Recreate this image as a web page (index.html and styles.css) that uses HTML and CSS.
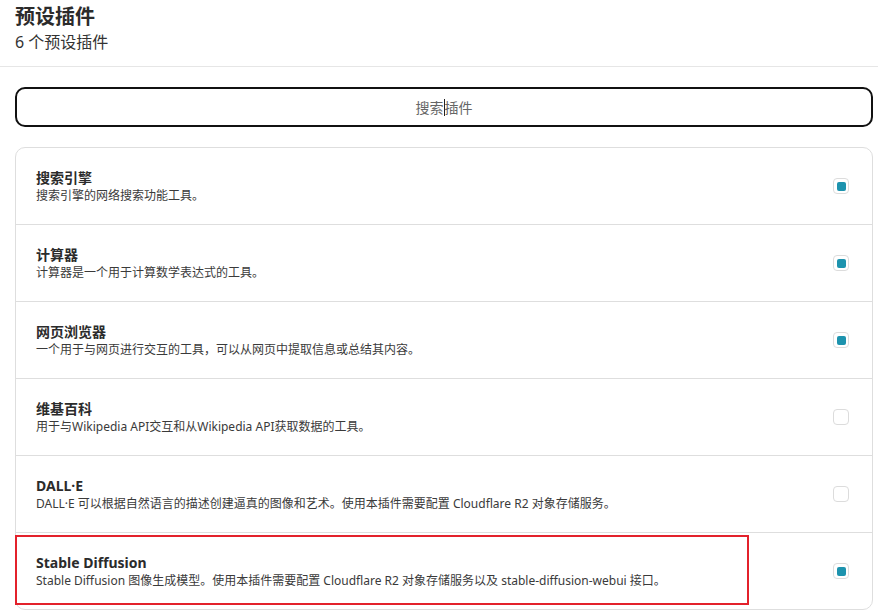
FILE: index.html
```html
<!DOCTYPE html>
<html lang="zh-CN">
<head>
<meta charset="utf-8">
<title>预设插件</title>
<link rel="stylesheet" href="styles.css">
</head>
<body>
<header class="header">
  <div class="title">预设插件</div>
  <div class="subtitle">6 个预设插件</div>
</header>
<main class="main">
  <div class="search"><span class="ph">搜索</span><span class="caret"></span><span class="ph">插件</span></div>
  <div class="list">
    <div class="row">
      <div class="info"><div class="name">搜索引擎</div><div class="desc">搜索引擎的网络搜索功能工具。</div></div>
      <span class="check on"></span>
    </div>
    <div class="row">
      <div class="info"><div class="name">计算器</div><div class="desc">计算器是一个用于计算数学表达式的工具。</div></div>
      <span class="check on"></span>
    </div>
    <div class="row">
      <div class="info"><div class="name">网页浏览器</div><div class="desc">一个用于与网页进行交互的工具，可以从网页中提取信息或总结其内容。</div></div>
      <span class="check on"></span>
    </div>
    <div class="row">
      <div class="info"><div class="name">维基百科</div><div class="desc">用于与Wikipedia API交互和从Wikipedia API获取数据的工具。</div></div>
      <span class="check"></span>
    </div>
    <div class="row">
      <div class="info"><div class="name">DALL·E</div><div class="desc">DALL·E 可以根据自然语言的描述创建逼真的图像和艺术。使用本插件需要配置 Cloudflare R2 对象存储服务。</div></div>
      <span class="check"></span>
    </div>
    <div class="row last">
      <div class="info"><div class="name">Stable Diffusion</div><div class="desc">Stable Diffusion 图像生成模型。使用本插件需要配置 Cloudflare R2 对象存储服务以及 stable-diffusion-webui 接口。</div></div>
      <span class="check on"></span>
      <div class="highlight"></div>
    </div>
  </div>
</main>
</body>
</html>
```
FILE: styles.css
```css
* { box-sizing: border-box; }
html, body { margin: 0; padding: 0; background: #fff; }
body {
  font-family: "Noto Sans", "Noto Sans CJK SC", sans-serif;
  color: #303030;
  width: 878px;
  height: 616px;
  overflow: hidden;
}
.header {
  padding: 3px 15px 13px;
  border-bottom: 1px solid #e6e6e6;
}
.title {
  font-size: 20px;
  line-height: 28px;
  font-weight: 700;
  color: #2b2b2b;
}
.subtitle {
  font-size: 16px;
  line-height: 22px;
  color: #333;
}
.main {
  padding: 20px 5px 0 15px;
}
.search {
  height: 40px;
  border: 2px solid #111;
  border-radius: 10px;
  display: flex;
  align-items: center;
  justify-content: center;
  font-size: 14px;
  color: #666;
}
.caret {
  display: inline-block;
  width: 1px;
  height: 17px;
  background: #222;
}
.list {
  margin-top: 20px;
  border: 1px solid #dedede;
  border-radius: 10px;
}
.row {
  position: relative;
  display: flex;
  align-items: center;
  justify-content: space-between;
  padding: 20px 23px 20px 20px;
  border-bottom: 1px solid #dedede;
}
.row.last { border-bottom: none; }
.name {
  font-size: 14px;
  line-height: 19px;
  font-weight: 700;
  color: #2b2b2b;
}
.desc {
  font-size: 12px;
  line-height: 17px;
  color: #3a3a3a;
}
.check {
  width: 16px;
  height: 16px;
  border: 1px solid #dcdcdc;
  border-radius: 4px;
  display: flex;
  align-items: center;
  justify-content: center;
  flex: none;
}
.check.on::after {
  content: "";
  width: 9px;
  height: 9px;
  border-radius: 2px;
  background: #1d93ae;
}
.highlight {
  position: absolute;
  left: -1px;
  top: 2px;
  width: 734px;
  height: 70px;
  border: 2px solid #e3212b;
  pointer-events: none;
}
```
